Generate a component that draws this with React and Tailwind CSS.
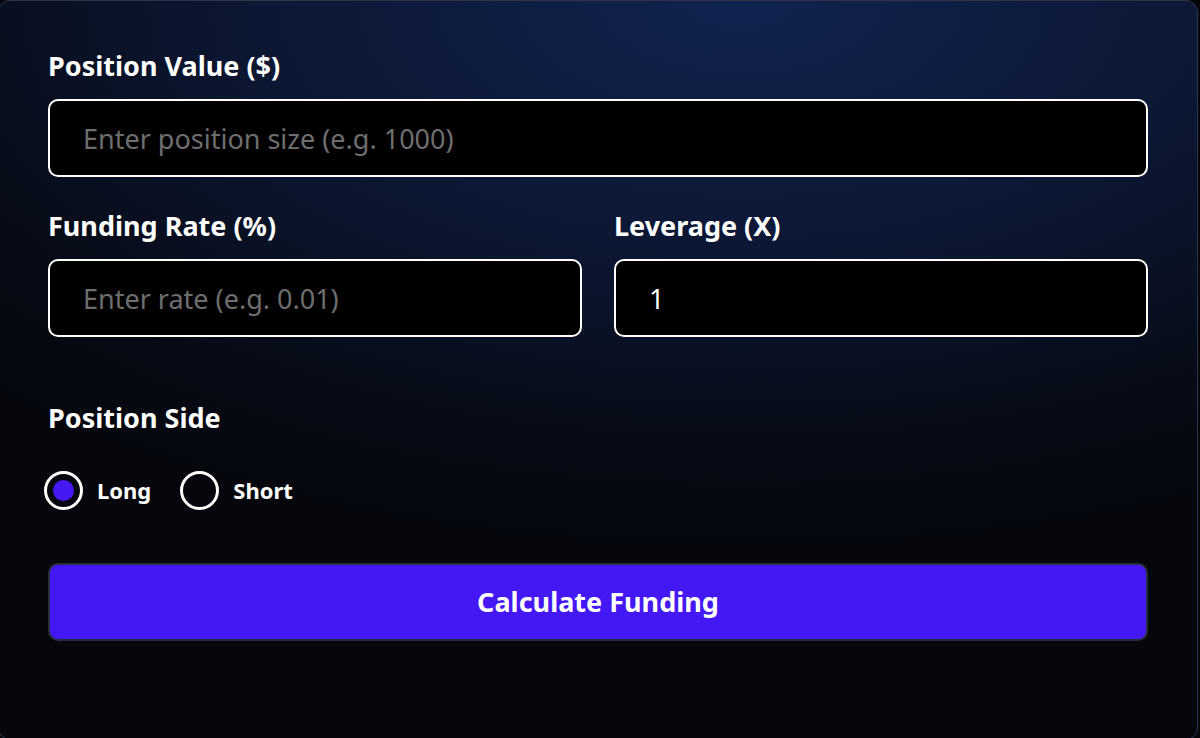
import React, { useState } from 'react';

const font = { fontFamily: '"Noto Sans", "Open Sans", sans-serif' };

const Field = ({ label, placeholder, value, onChange, className = '' }) => (
  <div className={`flex flex-col ${className}`}>
    <label className="text-[27px] leading-[30px] font-bold text-white mb-[18px]">{label}</label>
    <input
      type="text"
      value={value}
      onChange={(e) => onChange(e.target.value)}
      placeholder={placeholder}
      className="h-[78px] w-full rounded-[10px] border-2 border-white bg-black px-[33px] text-[27px] text-white placeholder:text-[#6e6e6e] outline-none"
    />
  </div>
);

const Radio = ({ label, checked, onClick }) => (
  <button type="button" onClick={onClick} className="flex items-center gap-[14px]">
    <span className="flex h-[39px] w-[39px] items-center justify-center rounded-full border-[3px] border-white">
      {checked && <span className="h-[21px] w-[21px] rounded-full bg-[#4619f2]"></span>}
    </span>
    <span className="text-[22px] font-bold text-white">{label}</span>
  </button>
);

export default function App() {
  const [position, setPosition] = useState('');
  const [rate, setRate] = useState('');
  const [leverage, setLeverage] = useState('1');
  const [side, setSide] = useState('long');

  return (
    <div className="h-[738px] w-[1200px] overflow-hidden bg-[#05070d]" style={font}>
      <div className="-ml-[2px] h-[740px] w-[1200px] rounded-[12px] border border-[#2b3448] bg-[radial-gradient(ellipse_90%_75%_at_62%_0%,_#112350_0%,_#0c1733_45%,_#070b16_80%,_#05070d_100%)] px-[49px] pt-[50px]">
        <Field
          label="Position Value ($)"
          placeholder="Enter position size (e.g. 1000)"
          value={position}
          onChange={setPosition}
        />

        <div className="mt-[34px] grid grid-cols-2 gap-[32px]">
          <Field label="Funding Rate (%)" placeholder="Enter rate (e.g. 0.01)" value={rate} onChange={setRate} />
          <Field label="Leverage (X)" placeholder="" value={leverage} onChange={setLeverage} />
        </div>

        <div className="mt-[66px] text-[27px] leading-[30px] font-bold text-white">Position Side</div>

        <div className="mt-[37px] -ml-[4px] flex h-[40px] items-center gap-[29px]">
          <Radio label="Long" checked={side === 'long'} onClick={() => setSide('long')} />
          <Radio label="Short" checked={side === 'short'} onClick={() => setSide('short')} />
        </div>

        <button
          type="button"
          className="mt-[53px] flex h-[78px] w-full items-center justify-center rounded-[10px] border-2 border-[#2a2f3d] bg-[#4418f5] text-[27px] font-bold text-white"
        >
          Calculate Funding
        </button>
      </div>
    </div>
  );
}
